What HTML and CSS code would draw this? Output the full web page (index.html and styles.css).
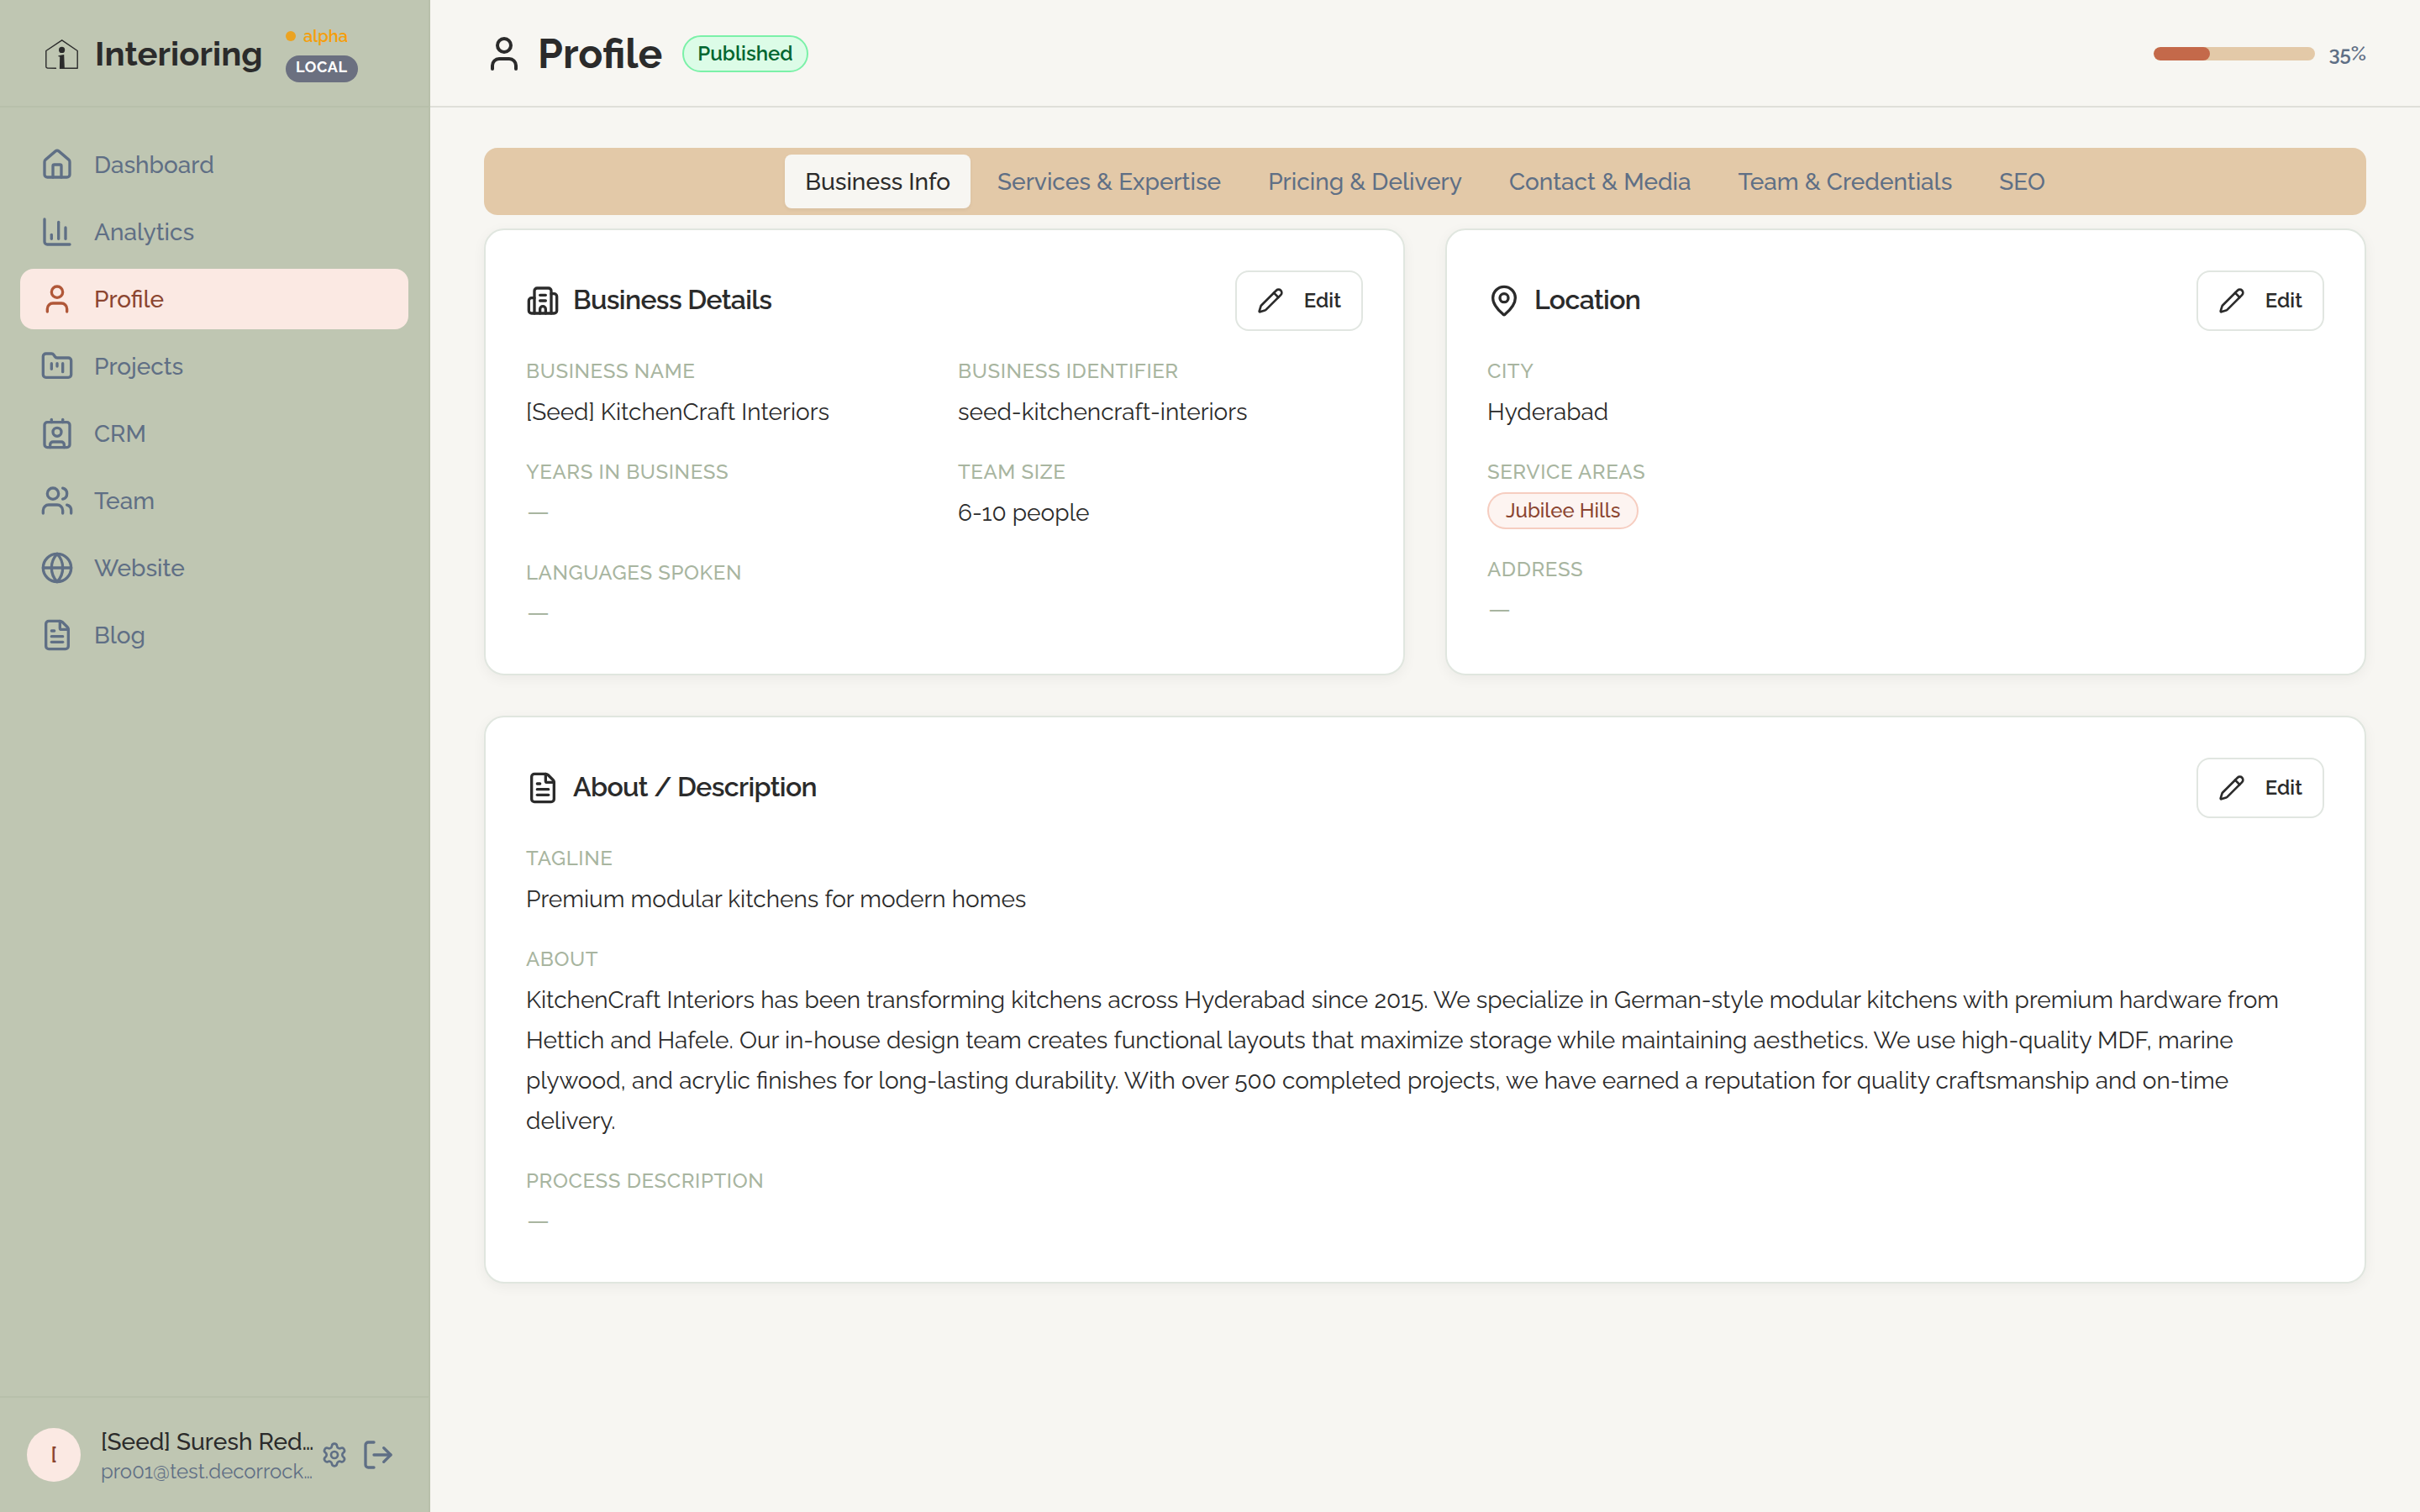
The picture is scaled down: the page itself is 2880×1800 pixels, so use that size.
FILE: index.html
```html
<!DOCTYPE html>
<html lang="en">
<head>
<meta charset="utf-8">
<title>Profile – Interioring</title>
<link rel="stylesheet" href="styles.css">
</head>
<body>
<svg class="sprite" aria-hidden="true">
  <symbol id="user" viewBox="0 0 24 24"><path d="M19 21v-2a4 4 0 0 0-4-4H9a4 4 0 0 0-4 4v2"/><circle cx="12" cy="7" r="4"/></symbol>
  <symbol id="pencil" viewBox="0 0 24 24"><path d="M21.174 6.812a1 1 0 0 0-3.986-3.987L3.842 16.174a2 2 0 0 0-.5.83l-1.321 4.352a.5.5 0 0 0 .623.622l4.353-1.32a2 2 0 0 0 .83-.497z"/><path d="m15 5 4 4"/></symbol>
  <symbol id="file" viewBox="0 0 24 24"><path d="M6 22a2 2 0 0 1-2-2V4a2 2 0 0 1 2-2h8a2.4 2.4 0 0 1 1.704.706l3.588 3.588A2.4 2.4 0 0 1 20 8v12a2 2 0 0 1-2 2z"/><path d="M14 2v5a1 1 0 0 0 1 1h5"/><path d="M10 9H8"/><path d="M16 13H8"/><path d="M16 17H8"/></symbol>
</svg>
<div class="app">
  <aside class="sidebar">
    <div class="brand">
      <svg class="logo" viewBox="0 0 40 37"><path class="logo-house" d="M13.5 35.3 L3.5 35 Q1.8 34.9 1.8 33.5 V14.5 L20.7 1.8 L39.2 14.5 V35.3 H23"/><circle cx="20.6" cy="13.4" r="3.6"/><path d="M16.4 20.2 L23.2 18.9 L23.9 36 H17.9 L18.2 21.4 L16.4 21.2 Z"/></svg>
      <span class="brand-name">Interioring</span>
      <div class="brand-tags">
        <span class="alpha"><i class="dot"></i>alpha</span>
        <span class="local">LOCAL</span>
      </div>
    </div>
    <nav class="nav">
      <a class="nav-item"><svg class="icon" viewBox="0 0 24 24"><path d="M15 21v-8a1 1 0 0 0-1-1h-4a1 1 0 0 0-1 1v8"/><path d="M3 10a2 2 0 0 1 .709-1.528l7-6a2 2 0 0 1 2.582 0l7 6A2 2 0 0 1 21 10v9a2 2 0 0 1-2 2H5a2 2 0 0 1-2-2z"/></svg><span>Dashboard</span></a>
      <a class="nav-item"><svg class="icon" viewBox="0 0 24 24"><path d="M3 3v16a2 2 0 0 0 2 2h16"/><path d="M18 17V9"/><path d="M13 17V5"/><path d="M8 17v-3"/></svg><span>Analytics</span></a>
      <a class="nav-item active"><svg class="icon"><use href="#user"/></svg><span>Profile</span></a>
      <a class="nav-item"><svg class="icon" viewBox="0 0 24 24"><path d="M4 20h16a2 2 0 0 0 2-2V8a2 2 0 0 0-2-2h-7.93a2 2 0 0 1-1.66-.9l-.82-1.2A2 2 0 0 0 7.93 3H4a2 2 0 0 0-2 2v13c0 1.1.9 2 2 2Z"/><path d="M8 10v4"/><path d="M12 10v2"/><path d="M16 10v6"/></svg><span>Projects</span></a>
      <a class="nav-item"><svg class="icon" viewBox="0 0 24 24"><path d="M16 2v2"/><path d="M7 22v-2a2 2 0 0 1 2-2h6a2 2 0 0 1 2 2v2"/><path d="M8 2v2"/><circle cx="12" cy="11" r="3"/><rect x="3" y="4" width="18" height="18" rx="2"/></svg><span>CRM</span></a>
      <a class="nav-item"><svg class="icon" viewBox="0 0 24 24"><path d="M16 21v-2a4 4 0 0 0-4-4H6a4 4 0 0 0-4 4v2"/><path d="M16 3.128a4 4 0 0 1 0 7.744"/><path d="M22 21v-2a4 4 0 0 0-3-3.87"/><circle cx="9" cy="7" r="4"/></svg><span>Team</span></a>
      <a class="nav-item"><svg class="icon" viewBox="0 0 24 24"><circle cx="12" cy="12" r="10"/><path d="M12 2a14.5 14.5 0 0 0 0 20 14.5 14.5 0 0 0 0-20"/><path d="M2 12h20"/></svg><span>Website</span></a>
      <a class="nav-item"><svg class="icon"><use href="#file"/></svg><span>Blog</span></a>
    </nav>
    <div class="account">
      <span class="avatar">[</span>
      <div class="who">
        <div class="who-name">[Seed] Suresh Red…</div>
        <div class="who-mail">pro01@test.decorrock…</div>
      </div>
      <button class="icon-btn"><svg class="icon icon-sm" viewBox="0 0 24 24"><path d="M9.671 4.136a2.34 2.34 0 0 1 4.659 0 2.34 2.34 0 0 0 3.319 1.915 2.34 2.34 0 0 1 2.33 4.033 2.34 2.34 0 0 0 0 3.831 2.34 2.34 0 0 1-2.33 4.033 2.34 2.34 0 0 0-3.319 1.915 2.34 2.34 0 0 1-4.659 0 2.34 2.34 0 0 0-3.32-1.915 2.34 2.34 0 0 1-2.33-4.033 2.34 2.34 0 0 0 0-3.831A2.34 2.34 0 0 1 6.35 6.051a2.34 2.34 0 0 0 3.319-1.915"/><circle cx="12" cy="12" r="3"/></svg></button>
      <button class="icon-btn"><svg class="icon" viewBox="0 0 24 24"><path d="m16 17 5-5-5-5"/><path d="M21 12H9"/><path d="M9 21H5a2 2 0 0 1-2-2V5a2 2 0 0 1 2-2h4"/></svg></button>
    </div>
  </aside>

  <main class="main">
    <header class="topbar">
      <svg class="icon icon-lg"><use href="#user"/></svg>
      <h1>Profile</h1>
      <span class="status">Published</span>
      <div class="progress">
        <div class="track"><div class="fill" style="width:34.5%"></div></div>
        <span>35%</span>
      </div>
    </header>
    <div class="content">
      <div class="tabs">
        <button class="tab selected">Business Info</button>
        <button class="tab">Services &amp; Expertise</button>
        <button class="tab">Pricing &amp; Delivery</button>
        <button class="tab">Contact &amp; Media</button>
        <button class="tab">Team &amp; Credentials</button>
        <button class="tab">SEO</button>
      </div>
      <div class="cards">
        <section class="card">
          <div class="card-head">
            <svg class="icon" viewBox="0 0 24 24"><path d="M10 12h4"/><path d="M10 8h4"/><path d="M14 21v-3a2 2 0 0 0-4 0v3"/><path d="M6 10H4a2 2 0 0 0-2 2v7a2 2 0 0 0 2 2h16a2 2 0 0 0 2-2V9a2 2 0 0 0-2-2h-2"/><path d="M6 21V5a2 2 0 0 1 2-2h8a2 2 0 0 1 2 2v16"/></svg>
            <h2>Business Details</h2>
            <button class="edit"><svg class="icon icon-sm"><use href="#pencil"/></svg>Edit</button>
          </div>
          <dl class="fields two">
            <div><dt>BUSINESS NAME</dt><dd>[Seed] KitchenCraft Interiors</dd></div>
            <div><dt>BUSINESS IDENTIFIER</dt><dd>seed-kitchencraft-interiors</dd></div>
            <div><dt>YEARS IN BUSINESS</dt><dd class="empty">—</dd></div>
            <div><dt>TEAM SIZE</dt><dd>6-10 people</dd></div>
            <div><dt>LANGUAGES SPOKEN</dt><dd class="empty">—</dd></div>
          </dl>
        </section>
        <section class="card">
          <div class="card-head">
            <svg class="icon" viewBox="0 0 24 24"><path d="M20 10c0 4.993-5.539 10.193-7.399 11.799a1 1 0 0 1-1.202 0C9.539 20.193 4 14.993 4 10a8 8 0 0 1 16 0"/><circle cx="12" cy="10" r="3"/></svg>
            <h2>Location</h2>
            <button class="edit"><svg class="icon icon-sm"><use href="#pencil"/></svg>Edit</button>
          </div>
          <dl class="fields">
            <div><dt>CITY</dt><dd>Hyderabad</dd></div>
            <div><dt>SERVICE AREAS</dt><dd class="chips"><span class="chip">Jubilee Hills</span></dd></div>
            <div><dt>ADDRESS</dt><dd class="empty">—</dd></div>
          </dl>
        </section>
        <section class="card wide">
          <div class="card-head">
            <svg class="icon"><use href="#file"/></svg>
            <h2>About / Description</h2>
            <button class="edit"><svg class="icon icon-sm"><use href="#pencil"/></svg>Edit</button>
          </div>
          <dl class="fields">
            <div><dt>TAGLINE</dt><dd>Premium modular kitchens for modern homes</dd></div>
            <div><dt>ABOUT</dt><dd>KitchenCraft Interiors has been transforming kitchens across Hyderabad since 2015. We specialize in German-style modular kitchens with premium hardware from Hettich and Hafele. Our in-house design team creates functional layouts that maximize storage while maintaining aesthetics. We use high-quality MDF, marine plywood, and acrylic finishes for long-lasting durability. With over 500 completed projects, we have earned a reputation for quality craftsmanship and on-time<br>delivery.</dd></div>
            <div><dt>PROCESS DESCRIPTION</dt><dd class="empty">—</dd></div>
          </dl>
        </section>
      </div>
    </div>
  </main>
</div>
</body>
</html>
```
FILE: styles.css
```css
* { box-sizing: border-box; }
body {
  margin: 0;
  background: #f7f6f2;
  color: #2b2b2b;
  font: 400 28px/48px Raleway, Lato, sans-serif;
}
h1, h2, dl, dd { margin: 0; }
button {
  font: inherit;
  color: inherit;
  background: none;
  border: 0;
  padding: 0;
}
.sprite { display: none; }
.icon {
  width: 40px;
  height: 40px;
  flex: none;
  fill: none;
  stroke: currentColor;
  stroke-width: 2;
  stroke-linecap: round;
  stroke-linejoin: round;
}
.icon-sm { width: 32px; height: 32px; }
.icon-lg { width: 48px; height: 48px; }

.app { display: flex; width: 2880px; height: 1800px; }

/* Sidebar */
.sidebar {
  width: 512px;
  flex: none;
  display: flex;
  flex-direction: column;
  background: #bfc6b2;
  border-right: 2px solid #b8c0ab;
  color: #5f6f85;
}
.brand {
  height: 128px;
  display: flex;
  align-items: center;
  padding-left: 53px;
  border-bottom: 2px solid #b8c0ab;
}
.logo { flex: none; width: 40px; height: 37px; margin-top: 3px; fill: #2b2b2b; }
.logo-house { fill: none; stroke: #2b2b2b; stroke-width: 1.4; stroke-linejoin: round; stroke-linecap: round; }
.brand-name {
  width: 247px;
  padding: 2px 0 0 20px;
  font-size: 40px;
  font-weight: 700;
  color: #2b2b2b;
}
.brand-tags { display: flex; flex-direction: column; align-items: flex-start; gap: 8px; }
.alpha {
  display: flex;
  align-items: center;
  gap: 9px;
  font-size: 20px;
  font-weight: 600;
  line-height: 30px;
  color: #f59e0b;
}
.dot { width: 12px; height: 12px; border-radius: 50%; background: #eba322; }
.local {
  height: 32px;
  padding: 0 12px;
  border-radius: 16px;
  background: #6b7080;
  color: #fff;
  font-size: 18px;
  font-weight: 700;
  line-height: 27px;
  letter-spacing: .6px;
}
.nav {
  flex: 1;
  display: flex;
  flex-direction: column;
  gap: 8px;
  padding: 32px 24px;
}
.nav-item {
  height: 72px;
  display: flex;
  align-items: center;
  gap: 24px;
  padding: 0 24px;
  border-radius: 16px;
  font-weight: 500;
}
.nav-item span { padding-top: 2px; }
.nav-item.active { background: #fbe9e3; color: #8b4530; }
.nav-item.active .icon { color: #b05738; }
.account {
  height: 138px;
  display: flex;
  align-items: center;
  padding: 0 32px;
  border-top: 2px solid #b8c0ab;
}
.avatar {
  width: 64px;
  height: 64px;
  border-radius: 50%;
  background: #fbe9e3;
  color: #8b4530;
  font-size: 24px;
  font-weight: 600;
  line-height: 64px;
  text-align: center;
}
.who { flex: 1; min-width: 0; margin-left: 24px; white-space: nowrap; }
.who-name { padding-top: 1px; font-weight: 500; line-height: 40px; color: #2b2b2b; }
.who-mail { margin-top: -1px; font-size: 24px; line-height: 32px; }
.icon-btn { display: flex; padding: 8px; }

/* Header */
.main { flex: 1; min-width: 0; }
.topbar {
  height: 128px;
  display: flex;
  align-items: center;
  padding: 0 64px;
  border-bottom: 2px solid #dfdfd9;
}
.topbar > * { margin-top: 2px; }
h1 { margin-left: 16px; font-size: 48px; font-weight: 700; }
.status {
  height: 44px;
  margin-left: 24px;
  padding: 0 16px;
  border: 2px solid #7bf1a8;
  border-radius: 22px;
  background: #dcfce7;
  color: #016630;
  font-size: 24px;
  font-weight: 600;
  line-height: 40px;
}
.progress {
  display: flex;
  align-items: center;
  gap: 16px;
  margin-left: auto;
  color: #5f6f85;
  font-size: 24px;
  font-weight: 600;
}
.track { width: 192px; height: 16px; border-radius: 8px; background: #e3c9a8; overflow: hidden; }
.fill { height: 100%; border-radius: 8px; background: #c4694a; }

/* Tabs */
.content { padding: 48px 64px; }
.tabs {
  height: 80px;
  display: flex;
  align-items: center;
  justify-content: center;
  gap: 8px;
  border-radius: 16px;
  background: #e3c9a8;
}
.tab { height: 64px; padding: 2px 24px 0; border-radius: 8px; color: #5f6f85; font-weight: 500; }
.tab.selected { background: #f7f6f2; color: #2b2b2b; box-shadow: 0 2px 4px rgba(0, 0, 0, .05); }

/* Cards */
.cards { display: grid; grid-template-columns: 1fr 1fr; gap: 48px; margin-top: 16px; }
.card {
  padding: 48px;
  border: 2px solid #e0e6df;
  border-radius: 24px;
  background: #fff;
  box-shadow: 0 4px 16px rgba(0, 0, 0, .05);
}
.wide { grid-column: 1 / -1; }
.card-head { display: flex; align-items: center; height: 72px; margin-bottom: 32px; }
h2 { margin-left: 16px; padding-bottom: 2px; font-size: 32px; font-weight: 600; letter-spacing: -.64px; }
.edit {
  height: 72px;
  display: flex;
  align-items: center;
  gap: 24px;
  margin-left: auto;
  padding: 0 24px;
  border: 2px solid #e1e6e1;
  border-radius: 16px;
  font-size: 24px;
  font-weight: 600;
}
.fields { display: grid; gap: 32px; }
.two { grid-template-columns: 1fr 1fr; }
dt { margin-bottom: 9px; color: #a8b5a0; font-size: 24px; font-weight: 500; line-height: 32px; letter-spacing: .6px; }
dd { margin-bottom: -1px; }
.empty { margin: -2px 0 1px 1px; color: #a8b5a0; font-size: 30px; }
.chips { display: flex; margin: -1px 0 0; }
.chip {
  height: 44px;
  padding: 0 20px;
  border: 2px solid #f6cdc0;
  border-radius: 22px;
  background: #fdf4f1;
  color: #8b4530;
  font-size: 24px;
  font-weight: 500;
  line-height: 40px;
}
```
